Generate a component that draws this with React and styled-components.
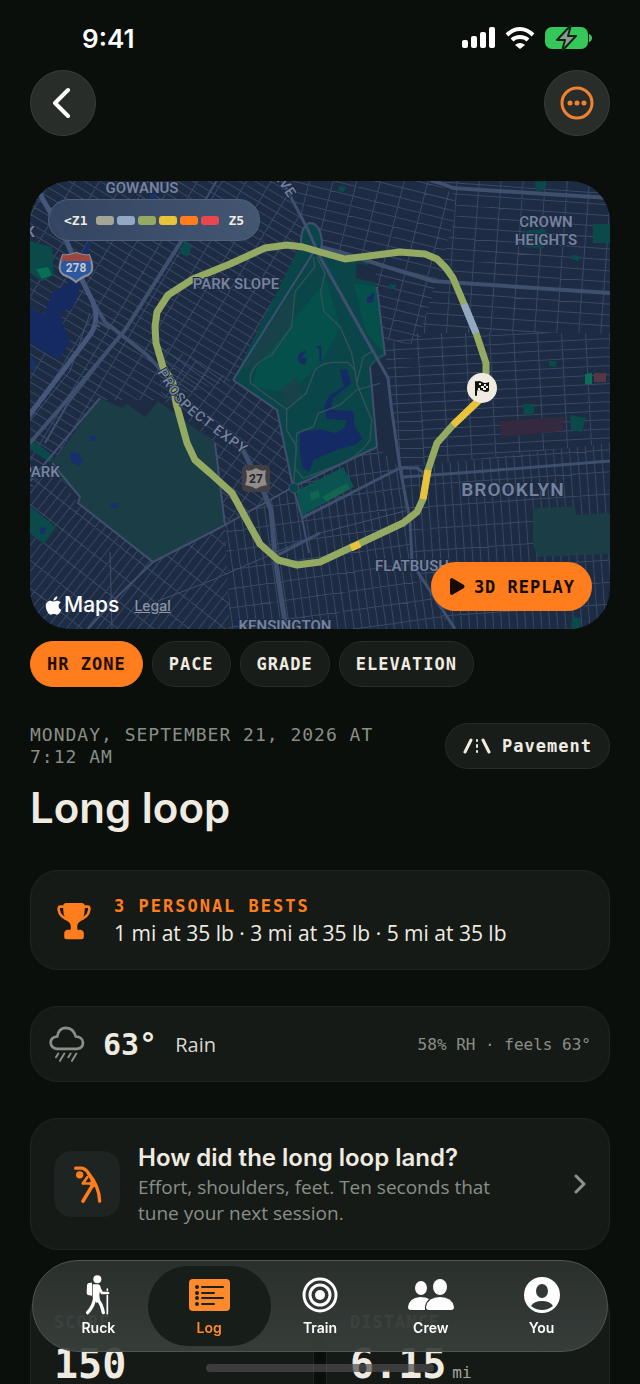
import React, { useState } from "react";
import styled, { createGlobalStyle } from "styled-components";
import { FaApple } from "react-icons/fa";

const zones = ["#a3a595", "#93a8c2", "#94aa62", "#e9c43b", "#ff7d1c", "#e8474f"];
const layers = ["HR ZONE", "PACE", "GRADE", "ELEVATION"];

const districts = [
  { id: "slope", area: "0,0 250,0 283,62 203,199 130,219 70,219 22,282 0,310", angle: 31, rows: 8, cols: 21 },
  { id: "terrace", area: "126,160 203,199 247,229 263,307 195,342 185,262 132,219", angle: 36, rows: 9, cols: 15 },
  { id: "prospect", area: "250,0 403,0 425,14 424,40 388,164 355,160 338,81 283,62", angle: 14, rows: 10, cols: 23 },
  { id: "crown", area: "403,0 580,0 580,152 390,152 424,40 425,14", angle: 4, rows: 11, cols: 22 },
  { id: "lefferts", area: "355,164 388,152 580,152 580,262 370,287 357,190", angle: -3, rows: 9, cols: 24 },
  { id: "flatbush", area: "370,287 580,262 580,448 420,448 382,382", angle: -4, rows: 22, cols: 8 },
  { id: "borough", area: "0,300 22,285 48,322 123,381 195,344 200,448 0,448", angle: 38, rows: 22, cols: 8 },
  { id: "kensington", area: "195,342 263,306 347,266 370,287 382,382 420,448 200,448", angle: -8, rows: 19, cols: 8 },
];

const labels = [
  { x: 206, y: 108, text: "PARK SLOPE" },
  { x: 516, y: 46, text: "CROWN" },
  { x: 516, y: 64, text: "HEIGHTS" },
  { x: 11, y: 296, text: "PARK" },
  { x: 382, y: 390, text: "FLATBUSH" },
  { x: 255, y: 450, text: "KENSINGTON" },
];

function Grid({ id, area, angle, rows, cols }) {
  const pts = area.split(" ").map((p) => p.split(",").map(Number));
  const cx = pts.reduce((sum, p) => sum + p[0], 0) / pts.length;
  const cy = pts.reduce((sum, p) => sum + p[1], 0) / pts.length;
  let d = "";
  for (let n = -26 * rows; n <= 26 * rows; n += rows) d += `M-320 ${n}H320`;
  for (let n = -26 * cols; n <= 26 * cols; n += cols) d += `M${n} -320V320`;
  return (
    <g clipPath={`url(#${id})`}>
      <clipPath id={id}>
        <polygon points={area} />
      </clipPath>
      <path d={d} transform={`translate(${Math.round(cx)} ${Math.round(cy)}) rotate(${angle})`} />
    </g>
  );
}

function RouteMap() {
  return (
    <MapSvg viewBox="0 0 580 448" role="img" aria-label="Route around Prospect Park">
      <rect width="580" height="448" fill="#1d2b43" />
      <g fill="none" stroke="#394966" strokeWidth="1">
        {districts.map((item) => (
          <Grid key={item.id} {...item} />
        ))}
      </g>

      <g fill="#1a3d46">
        <path d="M70 217L92 227 97 223 115 236 128 220 185 262 195 342 123 381 48 322 50 316 25 294 22 282Z" />
        <path d="M503 327L545 325 546 334 580 332 580 373 508 376 503 364Z" />
      </g>
      <g fill="#0b4a4a">
        <path d="M0 260L8 263 24 276 20 282 0 268ZM0 325L26 346 14 363 0 352Z" />
        <path d="M0 60L22 66 24 94 12 100 0 92Z" />
        <path d="M154 60L162 66 158 76 149 72Z" />
        <path d="M563 43H580V62H563ZM493 50L515 48 514 67 493 66Z" />
        <path d="M505 1L516 0 515 9 506 10ZM309 5L316 6 314 11 308 10ZM359 103L367 104 364 108 358 108Z" />
        <path d="M519 180L527 180 526 186 519 185ZM542 74L551 75 548 80 541 78ZM540 234L556 237 552 251 541 249Z" />
        <path d="M493 223L504 223 504 234 494 233ZM542 436L551 437 550 448H541Z" />
      </g>
      <path d="M555 193L562 192 562 203 555 203Z" fill="#0b6d55" />
      <path d="M6 88L18 86 22 94 12 98Z" fill="#0b6d55" />
      <path d="M470 240L533 236 533 250 471 256Z" fill="#35293f" />
      <path d="M564 192L576 192 576 201 564 201Z" fill="#553744" />
      <path d="M22 112L36 104 40 98 50 104 46 120 42 128 30 130 34 146 40 161 29 178 14 171 0 162V126L14 134Z" fill="#162a62" />
      <path d="M56 63L62 60 58 71 52 74ZM0 174L6 182 4 190 0 188ZM60 255h6v5h-6zM40 271l8 1 5 8-4 5-8-4zM81 322h6v5h-6zM10 346l6 1-1 6-5 0zM120 14l6-2-1 8-5-1z" fill="#18306a" />

      <path d="M271 62Q271 43 281 42Q292 44 292 66L302 79 338 81 347 106 356 174 340 186 347 266 263 306 247 229 203 199Z" fill="#0a4649" />
      <g transform="translate(150 39) scale(.3333)">
        <path d="M340 300L440 180 480 320 430 420 330 520 220 500 230 440ZM520 190L590 200 615 400 560 340Z" fill="#05504a" />
        <path d="M300 510L350 470 370 530 320 560ZM190 440L380 150 340 210 330 320 230 440Z" fill="#174249" />
        <path d="M530 130L565 135 590 150 585 188 528 174Z" fill="#1d2b43" />
        <path d="M560 235L583 215 580 245 562 250Z" fill="#172c63" />
        <path d="M360 635L420 628 470 640 495 620 500 600 440 598 432 560 450 525 492 500 480 450 500 448 514 490 460 535 452 570 520 572 525 620 548 655 530 672 470 690 400 720 388 755 368 745 360 700Z" fill="#152a64" />
        <path d="M378 392Q350 395 353 420Q365 440 378 430L380 412 366 414ZM405 380L424 376 424 426 418 426 418 386ZM425 432L455 448" fill="#172c63" />
        <path d="M350 812L490 742 522 800 362 890Z" fill="#0b5350" />
        <path d="M390 820L415 810 420 830 394 842ZM425 830L500 790 510 806 440 845Z" fill="#14654f" />
        <path
          d="M400 110L405 140 345 215 335 320 275 405Q200 440 212 490L320 568 378 520 405 450Q430 420 505 428L525 450 530 490 575 600 570 660Q540 710 460 740L370 775 345 745 350 640 400 620 415 580 480 555 530 510 600 490M410 110L435 160 422 215 432 275 480 320 515 400 525 450M320 568V630L350 680 340 800M530 490L550 410 575 395"
          fill="none"
          stroke="#35515c"
          strokeWidth="4"
        />
      </g>

      <g fill="none" stroke="#3f4f6e" strokeLinejoin="round">
        <path d="M203 199L283 72M203 199L247 229 263 306M347 106L355 174M340 186L347 266M70 217L0 300M185 262L195 344M22 282L50 316 48 322 123 381" strokeWidth="2" />
        <path d="M123 381L195 344 263 306 347 266M123 381L87 416 58 448M271 62Q271 43 281 42Q292 44 292 66M15 262L37 224 95 149 152 59 187 -1" strokeWidth="2" />
        <path d="M60 132L40 190 0 240M340 186Q345 176 355 174M128 420L180 400 290 352 375 330M80 371L82 448" strokeWidth="1" />
        <path d="M0 262L37 219 95 149 152 59" strokeWidth="4" />
        <path d="M290 66L310 71 357 86 403 100 490 106 580 112M400 -1L410 2 423 7 580 17" strokeWidth="4" />
        <path d="M373 296L430 292 580 280M370 287H387L394 292M248 374L290 352M272 337L370 287" strokeWidth="3" />
        <path d="M425 448L382 382 380 339 370 287 361 224 358 197 290 76 278 49 252 -1" strokeWidth="3" />
        <path d="M213 269L233 309 241 329 245 376 256 448" strokeWidth="5" />
        <path d="M63 121L75 141 117 174 133 191 143 203" strokeWidth="4" />
        <path d="M7 8L37 61 53 101 63 121Q70 140 60 154L7 224 -4 238" stroke="#45567a" strokeWidth="5" />
        <path d="M263 306L272 337 279 372M66 140L80 148M70 146L64 142" strokeWidth="2" />
      </g>
      <circle cx="264" cy="307" r="5" fill="#0a4649" stroke="#3f4f6e" />

      <g fill="none" strokeWidth="7" strokeLinejoin="round">
        <path
          d="M456 207V182L446 152 434 123 423 97 416 87 407 78 395 73 370 71 315 78 290 71 273 66 257 64 235 67 200 83 163 98 138 114 127 131 125 146 126 162 133 186 143 202 146 222 157 262 165 279 180 292 202 312 230 363 248 379 267 384 290 381 373 342 387 331 393 318 398 289 407 262 423 244 452 217"
          stroke={zones[2]}
        />
        <path d="M434 123L446 152" stroke={zones[1]} />
        <path d="M423 244L452 216M398 289L393 318M330 363L321 367" stroke={zones[3]} />
      </g>

      <MapLabels>
        <text x="112" y="12">GOWANUS</text>
        {labels.map((l) => (
          <text key={l.text} x={l.x} y={l.y}>{l.text}</text>
        ))}
        <text x="0" y="56">K</text>
        <path id="expy" d="M127 191C138 210 146 222 160 234L227 284" fill="none" stroke="none" />
        <path id="ave" d="M243 -6L267 30" fill="none" stroke="none" />
        <RoadName><textPath href="#expy">PROSPECT EXPY</textPath></RoadName>
        <RoadName><textPath href="#ave">AVE</textPath></RoadName>
        <Borough x="483" y="315">BROOKLYN</Borough>
      </MapLabels>

      <g>
        <path d="M33 74Q38 75 46 72Q54 75 59 74Q66 90 58 94Q50 97 46 101Q42 97 34 94Q26 90 33 74Z" fill="#2b579d" stroke="#8b8e9b" strokeWidth="2" />
        <path d="M33 74Q38 75 46 72Q54 75 59 74L61 80H31Z" fill="#9c4541" />
        <Shield x="46" y="91" fill="#c3c7cf">278</Shield>
        <rect x="212" y="284" width="28" height="27" rx="5" fill="#413e44" />
        <path d="M216 289Q220 291 226 287Q232 291 236 289Q234 297 237 304Q230 305 226 308Q222 305 215 304Q218 297 216 289Z" fill="#8f8c8a" />
        <Shield x="226" y="302" fill="#252529">27</Shield>
      </g>

      <g transform="translate(452 207)">
        <circle r="15" fill="#efebe0" />
        <path d="M-6 -6V7" stroke="#101210" strokeWidth="2" strokeLinecap="round" />
        <path d="M-6 -6Q-3 -8 0 -6T7 -6V3Q4 5 1 3T-6 3Z" fill="#101210" />
        <path d="M-3 -5h2v2h-2zM2 -4h2v2h-2zM-1 -2h3v2h-3zM4 -2h2v2h-2zM-4 0h2v2h-2zM1 0h3v2h-3z" fill="#efebe0" />
      </g>
    </MapSvg>
  );
}

const HikerIcon = () => (
  <svg width="28" height="40" viewBox="0 0 76 120" fill="none" stroke="currentColor" strokeLinecap="round" strokeLinejoin="round">
    <circle cx="36" cy="13" r="12" fill="currentColor" stroke="none" />
    <path d="M5 32Q5 23 14 23H20V62L8 60Q3 58 4 50Z" fill="currentColor" stroke="none" />
    <path d="M22 28H38Q44 28 46 36L42 60 44 76 34 84 22 66Z" fill="currentColor" stroke="none" />
    <path d="M42 40L50 54H68" strokeWidth="8" />
    <path d="M28 68Q26 92 7 113M38 76Q48 84 54 113" strokeWidth="10" />
    <path d="M66 42V46M66 62V116" strokeWidth="5" />
  </svg>
);

const LogIcon = () => (
  <svg width="41" height="32" viewBox="0 0 41 32">
    <rect width="41" height="32" rx="4" fill="currentColor" />
    <g stroke="#1b211c" strokeWidth="2" strokeLinecap="round">
      <path d="M13 8H34M13 14H25M13 19H34M13 25H25" />
      <path d="M8 8h0M8 14h0M8 19h0M8 25h0" strokeWidth="4" />
    </g>
  </svg>
);

const TrainIcon = () => (
  <svg width="36" height="36" viewBox="0 0 36 36" fill="none" stroke="currentColor" strokeWidth="3">
    <circle cx="18" cy="18" r="16" />
    <circle cx="18" cy="18" r="10" />
    <circle cx="18" cy="18" r="5" fill="currentColor" stroke="none" />
  </svg>
);

const CrewIcon = () => (
  <svg width="48" height="34" viewBox="0 0 48 34" fill="currentColor">
    <ellipse cx="14" cy="10" rx="6" ry="7" />
    <ellipse cx="33" cy="9" rx="7" ry="8" />
    <path d="M18 32H4Q1 32 1 29Q2 20 13 19Q19 19 22 21Q17 26 18 32Z" />
    <path d="M22 32Q19 32 19 29Q21 19 33 19Q45 19 47 29Q47 32 44 32Z" />
  </svg>
);

const YouIcon = () => (
  <svg width="36" height="36" viewBox="0 0 36 36">
    <circle cx="18" cy="18" r="18" fill="currentColor" />
    <ellipse cx="18" cy="14" rx="6" ry="7" fill="#323835" />
    <path d="M7 29Q10 24 18 24T29 29Q24 33 18 33T7 29Z" fill="#323835" />
  </svg>
);

const tabs = [
  { name: "Ruck", Icon: HikerIcon },
  { name: "Log", Icon: LogIcon },
  { name: "Train", Icon: TrainIcon },
  { name: "Crew", Icon: CrewIcon },
  { name: "You", Icon: YouIcon },
];

const TrophyIcon = () => (
  <svg width="34" height="38" viewBox="0 0 104 114" fill="currentColor">
    <path d="M28 2H76Q84 2 85 10V22Q84 52 66 62Q62 66 62 72V84H72Q82 86 82 96V106Q82 113 75 113H29Q22 113 22 106V96Q22 86 32 84H42V72Q42 66 38 62Q20 52 19 22V10Q20 2 28 2Z" />
    <path d="M22 13H10Q4 13 5 22Q8 46 38 54M82 13H94Q100 13 99 22Q96 46 66 54" fill="none" stroke="currentColor" strokeWidth="8" />
  </svg>
);

const RainIcon = () => (
  <svg width="36" height="37" viewBox="0 0 108 110" fill="none" stroke="currentColor" strokeLinecap="round" strokeLinejoin="round">
    <path d="M24 68H84Q102 66 102 49Q100 32 80 31Q74 6 50 5Q28 6 25 31Q5 33 5 50Q7 66 24 68Z" strokeWidth="8" />
    <path d="M28 82L21 93M46 82L33 104M65 82L58 93M82 82L69 104" strokeWidth="6" />
  </svg>
);

const StretchIcon = () => (
  <svg width="30" height="39" viewBox="0 0 90 116" fill="none" stroke="currentColor" strokeWidth="10" strokeLinecap="round" strokeLinejoin="round">
    <path d="M11 9H28Q38 9 48 22Q82 64 83 108" />
    <path d="M62 60L33 108" strokeWidth="11" />
    <path d="M46 36L32 55H60" strokeWidth="8" />
    <path d="M44 26L52 28 76 60 62 68 52 58 56 46Z" fill="currentColor" stroke="none" />
    <circle cx="23" cy="29" r="11" fill="currentColor" stroke="none" />
  </svg>
);

export default function App() {
  const [layer, setLayer] = useState("HR ZONE");
  const [tab, setTab] = useState("Log");

  return (
    <>
      <GlobalStyle />
      <Screen>
        <StatusBar>
          <Clock>9:41</Clock>
          <StatusIcons>
            <svg width="33" height="22" viewBox="0 0 33 22" fill="#fff">
              <rect y="13" width="6" height="8" rx="2" />
              <rect x="9" y="9" width="6" height="12" rx="2" />
              <rect x="18" y="5" width="6" height="16" rx="2" />
              <rect x="27" width="6" height="21" rx="2" />
            </svg>
            <svg width="30" height="22" viewBox="0 0 30 22" fill="none" stroke="#fff" strokeWidth="4">
              <path d="M2 8Q8 2 15 2T28 8M7 13Q10 10 15 10T23 13" />
              <path d="M15 22L10 18Q15 14 20 18Z" fill="#fff" stroke="none" />
            </svg>
            <svg width="47" height="26" viewBox="0 0 47 26">
              <rect y="2" width="43" height="22" rx="7" fill="#35c759" />
              <path d="M44 9Q47 10 47 13T44 17Z" fill="#35c759" />
              <path d="M26 0L12 15H20L17 26 31 11H23Z" fill="#8f9792" stroke="#0b2613" strokeWidth="2" strokeLinejoin="round" />
            </svg>
          </StatusIcons>
        </StatusBar>

        <NavRow>
          <RoundButton type="button" aria-label="Back">
            <svg width="20" height="32" viewBox="0 0 20 32" fill="none" stroke="#fff" strokeWidth="4" strokeLinecap="round" strokeLinejoin="round">
              <path d="M15 3L2 16 15 29" />
            </svg>
          </RoundButton>
          <RoundButton type="button" aria-label="More">
            <svg width="34" height="34" viewBox="0 0 34 34" fill="none" stroke="#f08230" strokeWidth="3">
              <circle cx="17" cy="17" r="15" />
              <path d="M10 17h0M17 17h0M24 17h0" strokeWidth="5" strokeLinecap="round" />
            </svg>
          </RoundButton>
        </NavRow>

        <MapCard>
          <RouteMap />
          <Legend>
            &lt;Z1
            <Swatches>
              {zones.map((color) => (
                <Swatch key={color} $color={color} />
              ))}
            </Swatches>
            Z5
          </Legend>
          <Attribution>
            <MapsBrand>
              <FaApple size={21} />
              Maps
            </MapsBrand>
            <LegalLink href="#legal">Legal</LegalLink>
          </Attribution>
          <ReplayButton type="button">
            <svg width="15" height="17" viewBox="0 0 15 17" fill="currentColor">
              <path d="M0 2Q0 0 2 0L14 7Q15 8 14 10L2 17Q0 17 0 15Z" />
            </svg>
            3D REPLAY
          </ReplayButton>
        </MapCard>

        <Chips>
          {layers.map((name) => (
            <Chip key={name} type="button" $active={name === layer} onClick={() => setLayer(name)}>
              {name}
            </Chip>
          ))}
        </Chips>

        <Meta>
          <DateText>MONDAY, SEPTEMBER 21, 2026 AT 7:12 AM</DateText>
          <Surface>
            <svg width="28" height="16" viewBox="0 0 28 16" fill="none" stroke="currentColor" strokeWidth="3" strokeLinecap="round">
              <path d="M8 2L2 14M20 2L26 14" />
              <path d="M14 2V3M14 7V9M14 13V14" strokeWidth="2" />
            </svg>
            Pavement
          </Surface>
        </Meta>
        <Title>Long loop</Title>

        <Cards>
          <BestsCard>
            <TrophyIcon />
            <div>
              <Eyebrow>3 PERSONAL BESTS</Eyebrow>
              <Bests>1 mi at 35 lb · 3 mi at 35 lb · 5 mi at 35 lb</Bests>
            </div>
          </BestsCard>

          <WeatherCard>
            <RainIcon />
            <Temp>63°</Temp>
            <Condition>Rain</Condition>
            <Humidity>58% RH · feels 63°</Humidity>
          </WeatherCard>

          <PromptCard type="button">
            <PromptIcon>
              <StretchIcon />
            </PromptIcon>
            <PromptBody>
              <PromptTitle>How did the long loop land?</PromptTitle>
              <PromptText>Effort, shoulders, feet. Ten seconds that tune your next session.</PromptText>
            </PromptBody>
            <svg width="12" height="20" viewBox="0 0 12 20" fill="none" stroke="#8f928c" strokeWidth="3" strokeLinecap="round" strokeLinejoin="round">
              <path d="M2 2L10 10 2 18" />
            </svg>
          </PromptCard>

          <Stats>
            <StatCard>
              <StatLabel>SCORE</StatLabel>
              <StatValue>150</StatValue>
            </StatCard>
            <StatCard>
              <StatLabel>DISTANCE</StatLabel>
              <StatValue>
                6.15<Unit>mi</Unit>
              </StatValue>
            </StatCard>
          </Stats>
        </Cards>

        <HomeIndicator />
        <TabBar>
          {tabs.map(({ name, Icon }) => (
            <Tab key={name} type="button" $active={name === tab} onClick={() => setTab(name)}>
              <IconBox>
                <Icon />
              </IconBox>
              {name}
            </Tab>
          ))}
        </TabBar>
      </Screen>
    </>
  );
}

const mono = `"DejaVu Sans Mono", "Liberation Mono", monospace`;
const sans = `"Open Sans", "Noto Sans", sans-serif`;
const grotesk = `Inter, "Liberation Sans", sans-serif`;

const GlobalStyle = createGlobalStyle`
  * {
    box-sizing: border-box;
  }
  body {
    margin: 0;
    background: #0a0f0b;
    color: #efebe1;
    font-family: ${sans};
  }
  button {
    margin: 0;
    border: 0;
    font: inherit;
    color: inherit;
    cursor: pointer;
  }
  svg {
    display: block;
    flex-shrink: 0;
  }
`;

const Screen = styled.main`
  height: 100vh;
  overflow: hidden;
  padding: 0 30px;
`;

const StatusBar = styled.header`
  display: flex;
  align-items: center;
  justify-content: space-between;
  height: 70px;
  padding: 6px 18px 0 52px;
`;
const Clock = styled.div`
  font-family: ${grotesk};
  font-size: 26px;
  font-weight: 600;
  color: #fff;
`;
const StatusIcons = styled.div`
  display: flex;
  align-items: center;
  gap: 10px;
`;

const NavRow = styled.nav`
  display: flex;
  justify-content: space-between;
  margin-bottom: 45px;
`;
const RoundButton = styled.button`
  display: flex;
  align-items: center;
  justify-content: center;
  width: 66px;
  height: 66px;
  padding: 0;
  border: 1px solid #383d3a;
  border-radius: 50%;
  background: #282d2a;
`;

const MapCard = styled.section`
  position: relative;
  border-radius: 40px;
  overflow: hidden;
`;
const MapSvg = styled.svg`
  width: 100%;
  height: auto;
`;
const MapLabels = styled.g`
  font-family: Roboto, ${grotesk};
  font-size: 15px;
  font-weight: 600;
  text-anchor: middle;
  fill: #76829d;
  stroke: #1d2b43;
  stroke-width: 2px;
  paint-order: stroke;
`;
const RoadName = styled.text`
  font-size: 14px;
  font-weight: 500;
  letter-spacing: 1px;
  text-anchor: start;
`;
const Borough = styled.text`
  font-size: 19px;
  letter-spacing: 1px;
`;
const Shield = styled.text`
  font-family: Roboto, ${grotesk};
  font-size: 12px;
  font-weight: 700;
  text-anchor: middle;
`;

const Legend = styled.div`
  position: absolute;
  top: 18px;
  left: 18px;
  display: flex;
  align-items: center;
  gap: 9px;
  height: 42px;
  padding: 0 15px;
  border: 1px solid #4d607c;
  border-radius: 21px;
  background: linear-gradient(100deg, rgba(52, 69, 98, 0.95), rgba(70, 89, 116, 0.95));
  font-family: ${mono};
  font-size: 13px;
  font-weight: 700;
`;
const Swatches = styled.div`
  display: flex;
  gap: 3px;
`;
const Swatch = styled.span`
  width: 18px;
  height: 9px;
  border-radius: 3px;
  background: ${(props) => props.$color};
`;

const Attribution = styled.div`
  position: absolute;
  left: 13px;
  bottom: 10px;
  display: flex;
  align-items: center;
  gap: 15px;
  font-family: ${grotesk};
`;
const MapsBrand = styled.div`
  display: flex;
  align-items: center;
  font-size: 21px;
  font-weight: 500;
  line-height: 28px;
  color: #fff;
`;
const LegalLink = styled.a`
  font-size: 14px;
  font-weight: 500;
  color: #8c96a6;
`;
const ReplayButton = styled.button`
  position: absolute;
  right: 18px;
  bottom: 18px;
  display: flex;
  align-items: center;
  gap: 9px;
  height: 49px;
  padding: 0 17px 0 19px;
  border-radius: 25px;
  background: #ff7d1c;
  color: #160c04;
  font-family: ${mono};
  font-size: 17px;
  font-weight: 700;
  letter-spacing: 1px;
`;

const Chips = styled.div`
  display: flex;
  gap: 9px;
  margin: 12px 0 36px;
`;
const Chip = styled.button`
  height: 46px;
  padding: 0 16px;
  border: 1px solid ${(props) => (props.$active ? "#ff7d1c" : "#272c28")};
  border-radius: 23px;
  background: ${(props) => (props.$active ? "#ff7d1c" : "#181d1a")};
  color: ${(props) => (props.$active ? "#1c0f05" : "#efebe1")};
  font-family: ${mono};
  font-size: 17px;
  font-weight: 700;
  letter-spacing: 1px;
`;

const Meta = styled.div`
  display: flex;
  align-items: center;
  justify-content: space-between;
  gap: 48px;
`;
const DateText = styled.div`
  font-family: ${mono};
  font-size: 18px;
  line-height: 22px;
  letter-spacing: 1px;
  color: #8b8e87;
`;
const Surface = styled.div`
  display: flex;
  align-items: center;
  gap: 11px;
  flex-shrink: 0;
  height: 46px;
  padding: 0 17px;
  border: 1px solid #272c28;
  border-radius: 23px;
  background: #181d1a;
  font-family: ${mono};
  font-size: 17px;
  font-weight: 700;
  letter-spacing: 1px;
`;
const Title = styled.h1`
  margin: 14px 0 37px;
  font-family: ${grotesk};
  font-size: 42px;
  font-weight: 600;
  line-height: 50px;
`;

const Cards = styled.div`
  display: flex;
  flex-direction: column;
  gap: 36px;
`;
const Card = styled.section`
  display: flex;
  align-items: center;
  border: 1px solid #222723;
  border-radius: 28px;
  background: #151a17;
`;
const BestsCard = styled(Card)`
  gap: 23px;
  height: 100px;
  padding: 2px 26px 0;
  color: #ff7d1c;
`;
const Eyebrow = styled.div`
  font-family: ${mono};
  font-size: 17px;
  font-weight: 700;
  line-height: 24px;
  letter-spacing: 2px;
`;
const Bests = styled.div`
  font-size: 21px;
  line-height: 30px;
  color: #efebe1;
`;
const WeatherCard = styled(Card)`
  height: 76px;
  padding: 0 18px;
  color: #8b8e87;
`;
const Temp = styled.div`
  margin: 0 18px;
  font-family: ${mono};
  font-size: 30px;
  font-weight: 700;
  color: #efebe1;
`;
const Condition = styled.div`
  flex: 1;
  font-size: 20px;
  color: #dad8cf;
`;
const Humidity = styled.div`
  font-family: ${mono};
  font-size: 16px;
`;

const PromptCard = styled(Card).attrs({ as: "button" })`
  gap: 18px;
  height: 132px;
  padding: 0 23px;
  border: 1px solid #222723;
  text-align: left;
`;
const PromptIcon = styled.div`
  display: flex;
  align-items: center;
  justify-content: center;
  flex-shrink: 0;
  width: 66px;
  height: 66px;
  border-radius: 18px;
  background: #1e2421;
  color: #ff7d1c;
`;
const PromptBody = styled.div`
  flex: 1;
`;
const PromptTitle = styled.div`
  font-family: ${grotesk};
  font-size: 24px;
  font-weight: 600;
  line-height: 32px;
`;
const PromptText = styled.div`
  max-width: 380px;
  font-size: 19px;
  line-height: 26px;
  color: #8b8e87;
`;

const Stats = styled.div`
  display: grid;
  grid-template-columns: 1fr 1fr;
  gap: 12px;
`;
const StatCard = styled.section`
  padding: 24px 23px;
  border: 1px solid #222723;
  border-radius: 28px;
  background: #151a17;
  font-family: ${mono};
`;
const StatLabel = styled.div`
  font-size: 17px;
  font-weight: 700;
  line-height: 22px;
  letter-spacing: 1px;
  color: #8b8e87;
`;
const StatValue = styled.div`
  font-size: 40px;
  font-weight: 700;
  line-height: 62px;
`;
const Unit = styled.span`
  margin-left: 6px;
  font-size: 16px;
  font-weight: 400;
  color: #a3a59d;
`;

const HomeIndicator = styled.div`
  position: fixed;
  bottom: 12px;
  left: 50%;
  width: 228px;
  height: 8px;
  margin-left: -114px;
  border-radius: 4px;
  background: rgba(75, 75, 75, 0.7);
`;
const TabBar = styled.nav`
  position: fixed;
  right: 32px;
  bottom: 32px;
  left: 32px;
  display: flex;
  height: 92px;
  padding: 5px 10px;
  border: 1px solid #4e5450;
  border-radius: 46px;
  background: linear-gradient(rgba(45, 50, 47, 0.93), rgba(57, 64, 60, 0.93));
`;
const Tab = styled.button`
  position: relative;
  display: flex;
  flex: 1;
  flex-direction: column;
  align-items: center;
  gap: 2px;
  padding: 8px 0 0;
  background: none;
  color: ${(props) => (props.$active ? "#ff8a2b" : "#fff")};
  font-family: ${grotesk};
  font-size: 14px;
  font-weight: 600;
  line-height: 20px;

  &::before {
    content: "";
    position: absolute;
    inset: 0 -6px;
    z-index: -1;
    border-radius: 40px;
    background: ${(props) => (props.$active ? "#171d18" : "none")};
  }
`;
const IconBox = styled.span`
  display: flex;
  align-items: center;
  height: 42px;
`;
